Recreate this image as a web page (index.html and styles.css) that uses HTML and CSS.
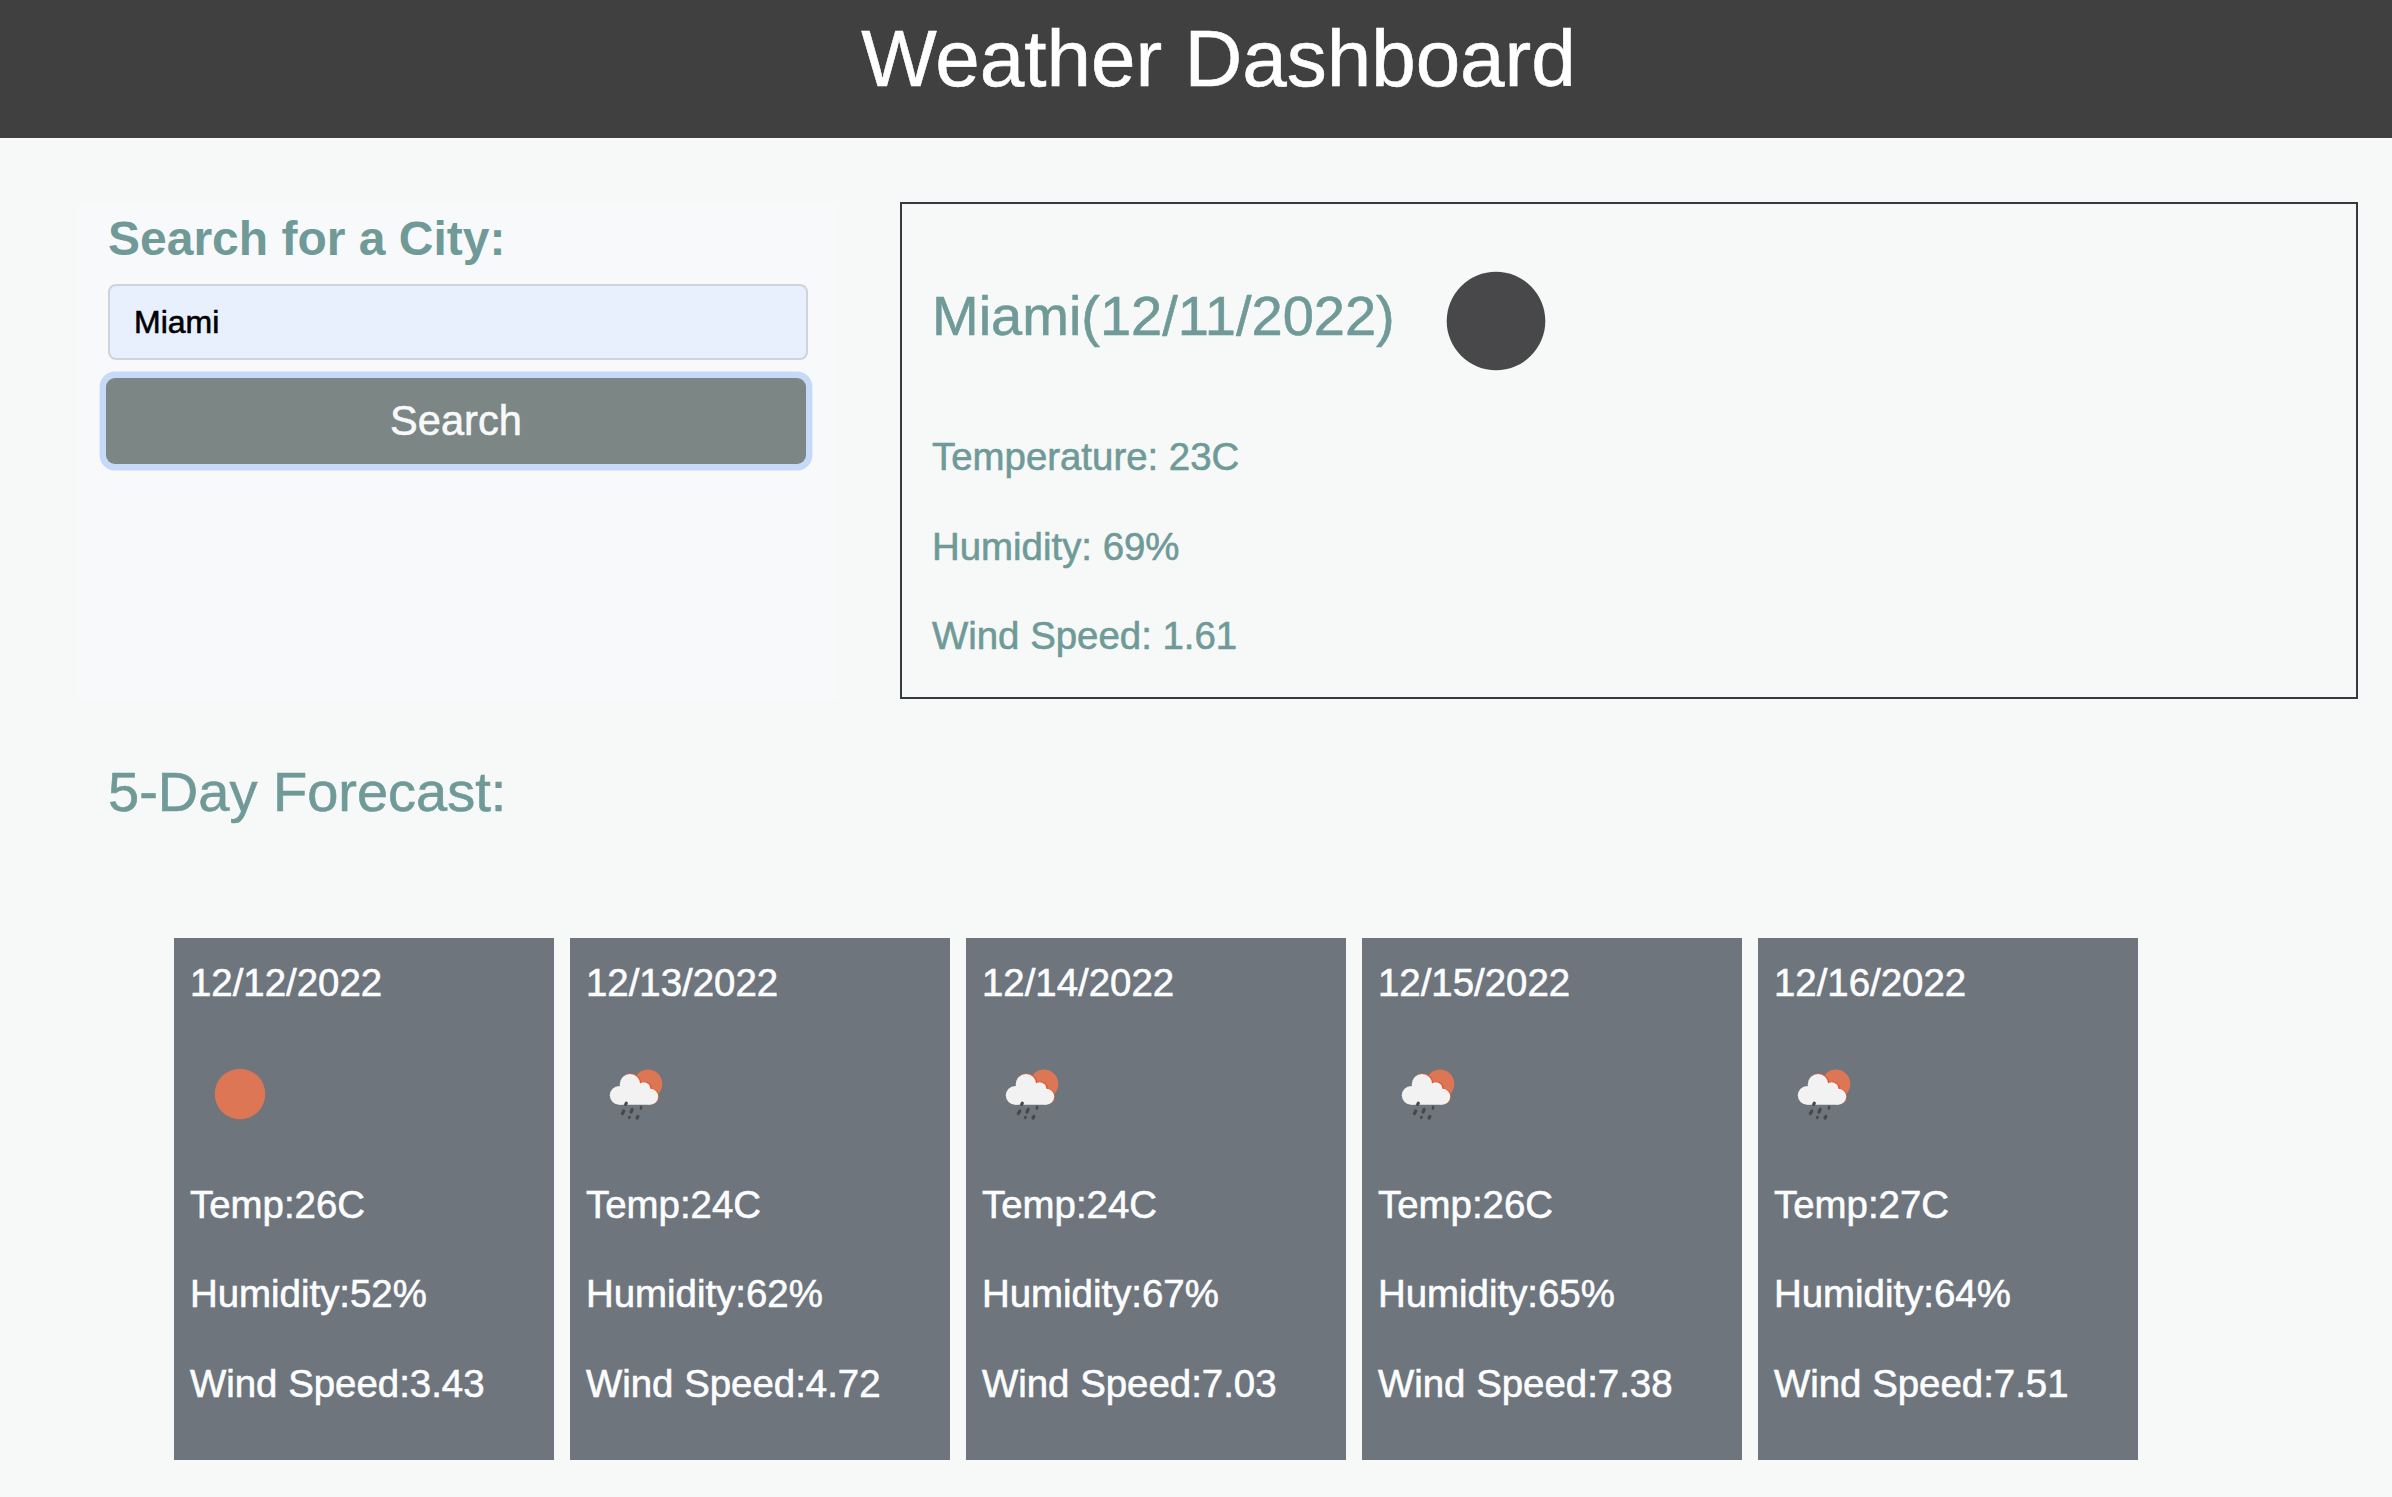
FILE: index.html
```html
<!DOCTYPE html>
<html lang="en">
<head>
<meta charset="utf-8">
<title>Weather Dashboard</title>
<link rel="stylesheet" href="styles.css">
</head>
<body>
<svg class="sprite" aria-hidden="true">
  <symbol id="sun" viewBox="0 0 100 100"><circle cx="50" cy="50" r="25.3" fill="#dc7654"/></symbol>
  <symbol id="rain" viewBox="0 0 100 100">
    <circle cx="62" cy="39.9" r="14.3" fill="#dc7654"/>
    <g fill="#dd5a35">
      <circle cx="45" cy="40" r="10.6"/><circle cx="59" cy="44.6" r="7"/><circle cx="65" cy="52.4" r="8"/>
    </g>
    <g fill="#f2f2f2">
      <circle cx="44" cy="40.4" r="10.3"/><circle cx="33.2" cy="51.3" r="9.4"/>
      <circle cx="57.8" cy="45" r="6.7"/><circle cx="64.2" cy="52.7" r="8"/>
      <path d="M33 60.7h31.2V46H44L33 48z"/>
    </g>
    <g stroke="#484848" stroke-width="3.2" stroke-linecap="round">
      <path d="M40.3 59.2l-.6 1.2"/><path d="M37.8 67l-1.4 2.6"/><path d="M46.2 65.4l-1.2 2.6"/>
      <path d="M51.9 72.4l-.8 1.6"/><path d="M55.2 62.8l-.4 1.8" stroke-width="2.4"/><path d="M43.5 73l-.3.8" stroke-width="2.6"/>
    </g>
  </symbol>
</svg>
<header class="header"><h1>Weather Dashboard</h1></header>
<main>
  <div class="top">
    <form class="search">
      <h2 class="search-title">Search for a City:</h2>
      <input class="city-input" type="text" value="Miami" aria-label="City">
      <button class="search-button" type="button">Search</button>
    </form>
    <section class="current">
      <div class="current-head">
        <h2>Miami(12/11/2022)</h2>
        <svg class="current-icon" viewBox="0 0 200 200"><circle cx="100" cy="100" r="49.3" fill="#48484a"/></svg>
      </div>
      <p>Temperature: 23C</p>
      <p>Humidity: 69%</p>
      <p>Wind Speed: 1.61</p>
    </section>
  </div>
  <h2 class="forecast-title">5-Day Forecast:</h2>
  <div class="forecast">
    <article class="card"><p>12/12/2022</p><svg class="icon"><use href="#sun"/></svg><p>Temp:26C</p><p>Humidity:52%</p><p>Wind Speed:3.43</p></article>
    <article class="card"><p>12/13/2022</p><svg class="icon"><use href="#rain"/></svg><p>Temp:24C</p><p>Humidity:62%</p><p>Wind Speed:4.72</p></article>
    <article class="card"><p>12/14/2022</p><svg class="icon"><use href="#rain"/></svg><p>Temp:24C</p><p>Humidity:67%</p><p>Wind Speed:7.03</p></article>
    <article class="card"><p>12/15/2022</p><svg class="icon"><use href="#rain"/></svg><p>Temp:26C</p><p>Humidity:65%</p><p>Wind Speed:7.38</p></article>
    <article class="card"><p>12/16/2022</p><svg class="icon"><use href="#rain"/></svg><p>Temp:27C</p><p>Humidity:64%</p><p>Wind Speed:7.51</p></article>
  </div>
</main>
</body>
</html>
```
FILE: styles.css
```css
* { box-sizing: border-box; }
body {
  margin: 0;
  min-height: 1497px;
  background: #f7f9f8;
  color: #6f9a98;
  font: 38.4px/1.5 "Liberation Sans", Arial, sans-serif;
  -webkit-text-stroke: 0.6px currentColor;
  overflow: hidden;
}
h1, h2, p { margin: 0; font-weight: 400; line-height: 1.2; }
h2 { font-size: 56px; }
p { margin-bottom: 32px; line-height: 57.6px; }
.sprite { display: none; }
.header {
  height: 138px;
  padding: 11px 0 0 45px;
  background: #404040;
  color: #fff;
  text-align: center;
}
.header h1 { font-size: 80px; }
.top {
  display: flex;
  gap: 62px;
  height: 497px;
  margin: 64px 34px 0 78px;
}
.search {
  display: flex;
  flex-direction: column;
  align-items: flex-start;
  width: 760px;
  padding: 8px 28px;
  background: #f8f9fb;
}
.search-title {
  height: 74px;
  padding-left: 2px;
  font-size: 48px;
  font-weight: 700;
  -webkit-text-stroke: 0;
}
.city-input {
  width: 700px;
  height: 76px;
  margin: 0 0 18px 2px;
  padding: 0 24px;
  border: 2px solid #ced4da;
  border-radius: 8px;
  background: #e8effd;
  color: #000;
  font: 32px "Liberation Sans", Arial, sans-serif;
}
.search-button {
  width: 700px;
  height: 86px;
  padding: 0;
  border: 0;
  border-radius: 9px;
  background: #7b8685;
  box-shadow: 0 0 0 6.4px #c6d9f9;
  color: #f8f9fa;
  font: 41.6px "Liberation Sans", Arial, sans-serif;
}
.current {
  flex: 1;
  padding-left: 30px;
  border: 2px solid #343a40;
}
.current-head {
  display: flex;
  height: 224px;
}
.current-head h2 { padding-top: 78px; }
.current-icon {
  width: 200px;
  height: 200px;
  margin: 17px 0 0 1px;
}
.forecast-title { margin: 59px 0 0 108px; }
.forecast {
  display: flex;
  gap: 16px;
  margin: 113px 0 0 174px;
}
.card {
  width: 380px;
  height: 522px;
  padding: 16px;
  background: #6e757d;
  color: #fcfdfe;
}
.icon {
  display: block;
  width: 100px;
  height: 100px;
  margin-bottom: 32px;
}
```
